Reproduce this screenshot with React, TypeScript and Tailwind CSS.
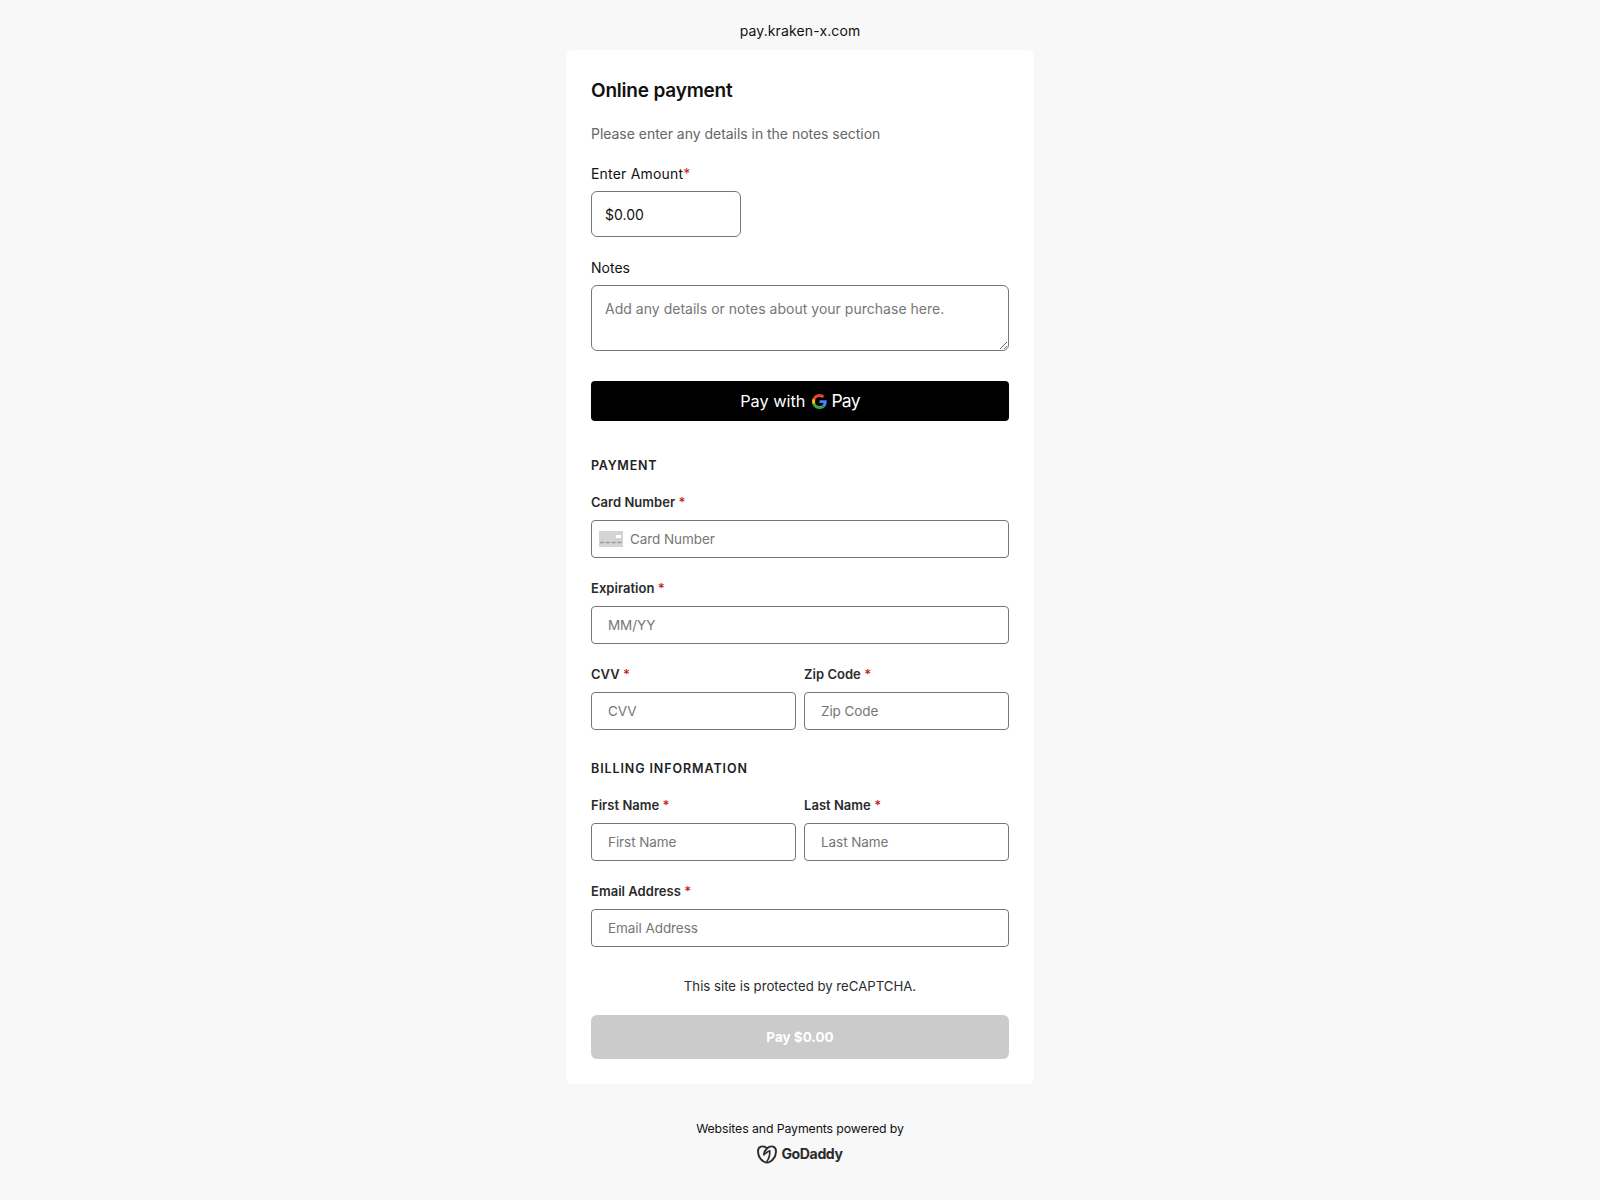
const font = "font-['Inter','Open_Sans',sans-serif]";

function Req({ label }: { label: string }) {
  return (
    <label className="block h-[18px] text-[13px] leading-[18px] font-semibold tracking-[0.03px] text-[#2b2b2b]">
      {label} <span className="text-[#c71f1f]">*</span>
    </label>
  );
}

function Field({ label, placeholder, icon, className = "" }: { label: string; placeholder: string; icon?: boolean; className?: string }) {
  return (
    <div className={className}>
      <Req label={label} />
      <div className="mt-[9px] flex h-[38px] items-center rounded-[4px] border border-[#767676] bg-white">
        {icon && <CardIcon />}
        <input
          placeholder={placeholder}
          className={`h-full w-full min-w-0 bg-transparent text-[13.5px] tracking-[-0.07px] outline-none placeholder:text-[#767676] ${icon ? "pl-[7px]" : "pl-4"}`}
        />
      </div>
    </div>
  );
}

function CardIcon() {
  return (
    <svg width="24" height="16" viewBox="0 0 24 16" className="ml-[7px] shrink-0">
      <rect width="24" height="16" fill="#d4d4d4" />
      <rect x="17" y="4" width="5" height="3" fill="#fff" />
      <path d="M1 11.5h22" stroke="#9c9c9c" strokeWidth="1.5" strokeDasharray="4.2 1.6" />
    </svg>
  );
}

function GoogleG() {
  return (
    <svg width="15" height="15" viewBox="0 0 48 48" className="shrink-0">
      <path fill="#EA4335" d="M24 9.500c3.500 0 6.700 1.200 9.200 3.600l6.900-6.900C35.900 2.400 30.500 0 24 0 14.600 0 6.500 5.400 2.600 13.200l8 6.200C12.500 13.500 17.800 9.500 24 9.500z" />
      <path fill="#4285F4" d="M47 24.500c0-1.600-.1-3.100-.4-4.500H24v9h12.900c-.6 3-2.200 5.400-4.700 7.100l7.700 6C44.400 38 47 31.800 47 24.500z" />
      <path fill="#FBBC05" d="M10.600 28.600c-.5-1.500-.8-3-.8-4.600s.3-3.100.8-4.600l-8-6.200C.9 16.500 0 20.100 0 24s.9 7.500 2.600 10.800l8-6.200z" />
      <path fill="#34A853" d="M24 48c6.500 0 11.900-2.100 15.900-5.900l-7.700-6c-2.200 1.500-4.900 2.400-8.200 2.400-6.200 0-11.500-4-13.400-9.900l-8 6.200C6.500 42.600 14.600 48 24 48z" />
    </svg>
  );
}

function GoDaddyMark() {
  return (
    <svg width="20" height="19" viewBox="0 0 21 19" fill="none" stroke="#2b2b2b" strokeWidth="2" strokeLinecap="round" strokeLinejoin="round">
      <path d="M10.500 3C8.800 1.300 6.200.6 4.100 1.300 1.700 2.100.9 4.500 1.100 7c.4 4.300 3 8.300 6.300 10.100 1.900 1 4.300 1 6.200 0 3.300-1.800 5.900-5.800 6.300-10.100 .2-2.500-.6-4.900-3-5.700-2.100-.7-4.400 0-6.200 1.700-1.900 1.700-3.200 4-3.500 6.700" />
      <path d="M9 8.500c1.200-1.400 2.800-2.500 4.400-3 .2 3.500-.7 8-2.900 11" strokeWidth="1.700" />
    </svg>
  );
}

export default function App() {
  return (
    <div className={`${font} flex min-h-[1200px] flex-col items-center bg-[#f8f8f8] text-[#111111]`}>
      <div className="mt-[21px] h-[20px] text-[14px] leading-[20px] tracking-[0.12px]">pay.kraken-x.com</div>

      <div className="mt-[9px] w-[468px] rounded-[7px] bg-white px-[25px] pb-[25px] pt-[27px]">
        <h1 className="h-[28px] text-[19px] leading-[28px] font-semibold tracking-[-0.2px]">Online payment</h1>
        <p className="mt-[19px] h-[20px] text-[14px] leading-[20px] tracking-[-0.03px] text-[#666666]">Please enter any details in the notes section</p>

        <div className="mt-[20px] h-[20px] text-[14px] leading-[20px] tracking-[0.2px]">
          Enter Amount<span className="text-[#c71f1f]">*</span>
        </div>
        <input
          defaultValue="$0.00"
          className="mt-[7px] block h-[46px] w-[150px] rounded-[6px] border border-[#767676] px-[13px] text-[14px] outline-none"
        />

        <div className="mt-[21px] h-[20px] text-[14px] leading-[20px]">Notes</div>
        <textarea
          placeholder="Add any details or notes about your purchase here."
          className="mt-[7px] block h-[66px] w-[418px] rounded-[6px] border border-[#767676] px-[13px] py-[13px] text-[14px] leading-[20px] tracking-[0.02px] outline-none placeholder:text-[#767676]"
        />

        <button className="mt-[30px] flex h-[40px] w-full items-center justify-center rounded-[4px] bg-black text-[16.3px] text-white">
          Pay with
          <span className="ml-[7px] mr-[4px]"><GoogleG /></span>
          <span className="text-[17.5px] tracking-[-0.7px]">Pay</span>
        </button>

        <h2 className="mt-[36px] h-[18px] text-[12.5px] leading-[18px] font-semibold tracking-[0.75px] text-[#222222]">PAYMENT</h2>
        <Field className="mt-[18px]" label="Card Number" placeholder="Card Number" icon />
        <Field className="mt-[21px]" label="Expiration" placeholder="MM/YY" />
        <div className="mt-[21px] flex gap-2">
          <Field className="w-[205px]" label="CVV" placeholder="CVV" />
          <Field className="w-[205px]" label="Zip Code" placeholder="Zip Code" />
        </div>

        <h2 className="mt-[30px] h-[18px] text-[12.5px] leading-[18px] font-semibold tracking-[0.9px] text-[#222222]">BILLING INFORMATION</h2>
        <div className="mt-[18px] flex gap-2">
          <Field className="w-[205px]" label="First Name" placeholder="First Name" />
          <Field className="w-[205px]" label="Last Name" placeholder="Last Name" />
        </div>
        <Field className="mt-[21px]" label="Email Address" placeholder="Email Address" />

        <p className="mt-[29px] h-[20px] text-center text-[13.2px] leading-[20px] text-[#2b2b2b]">This site is protected by reCAPTCHA.</p>

        <button className="mt-[19px] h-[44px] w-full rounded-[6px] bg-[#cbcbcb] text-[13.5px] font-bold text-white">Pay $0.00</button>
      </div>

      <div className="mt-[36px] h-[18px] text-[12.3px] leading-[18px] tracking-[-0.1px]">Websites and Payments powered by</div>
      <div className="mt-[6px] flex items-center gap-[4px]">
        <GoDaddyMark />
        <span className="text-[14.1px] leading-[20px] font-bold tracking-[-0.4px] text-[#2b2b2b]">GoDaddy</span>
      </div>
    </div>
  );
}
